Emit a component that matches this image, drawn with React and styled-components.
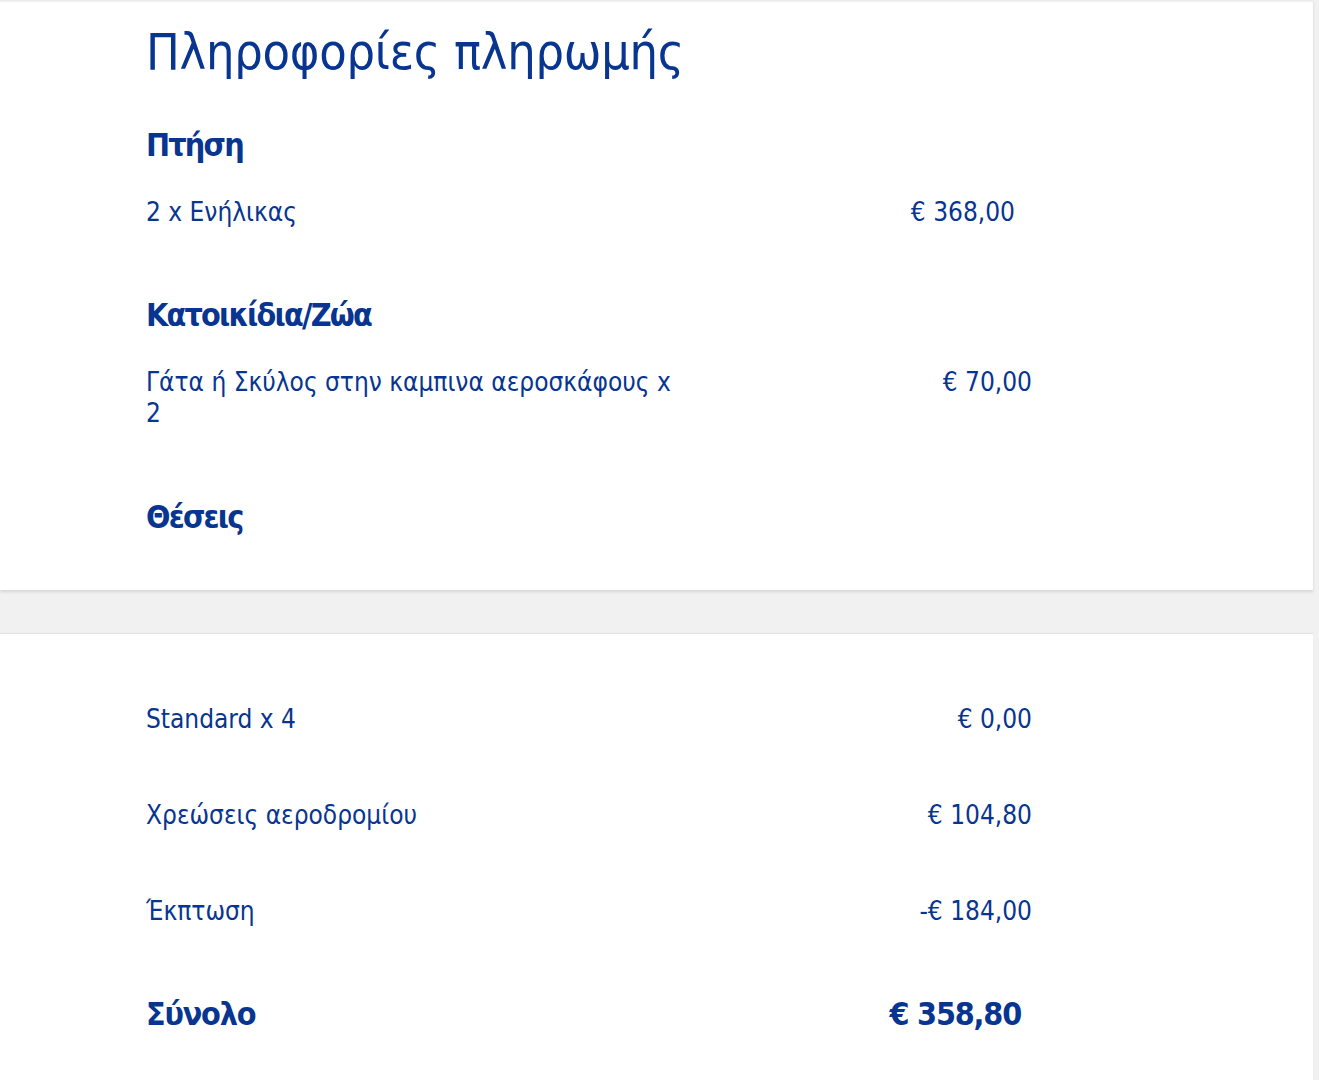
import React from 'react';
import styled, { createGlobalStyle } from 'styled-components';

const GlobalStyle = createGlobalStyle`
	html, body {
		margin: 0;
		padding: 0;
		background: #f1f1f1;
	}
	body {
		font-family: "DejaVu Sans Condensed", "DejaVu Sans", sans-serif;
		color: #073590;
	}
`;

const Page = styled.div`
	width: 1313px;
	min-height: 1080px;
	display: flex;
	flex-direction: column;
	gap: 44px;
`;

const Card = styled.section`
	background: #ffffff;
	padding: ${(props) => props.$padding};
	box-shadow: ${(props) => props.$shadow};
	flex: ${(props) => (props.$fill ? 1 : 'none')};
`;

const Title = styled.h1`
	margin: 0 0 43px 0;
	font-size: 50px;
	line-height: 60px;
	font-weight: 400;
	letter-spacing: -0.25px;
`;

const SectionTitle = styled.h3`
	margin: 0 0 ${(props) => props.$after || '32px'} 0;
	font-size: 32px;
	line-height: 40px;
	font-weight: 700;
	letter-spacing: -1.8px;
`;

const Row = styled.div`
	width: 886px;
	display: flex;
	justify-content: space-between;
	align-items: flex-start;
	margin-bottom: ${(props) => props.$after || '0'};
	padding-right: ${(props) => props.$inset || '0'};
	box-sizing: border-box;
	font-size: ${(props) => (props.$total ? '32px' : '26px')};
	font-weight: ${(props) => (props.$total ? 700 : 400)};
	line-height: ${(props) => (props.$total ? '40px' : '31px')};
	letter-spacing: ${(props) => (props.$total ? '-1.2px' : '0')};
`;

const Label = styled.span`
	width: 545px;
`;

const Price = styled.span`
	white-space: nowrap;
	text-align: right;
`;

const App = () => {
	return (
		<>
			<GlobalStyle />
			<Page>
				<Card
					$padding="22px 0 53px 146px"
					$shadow="inset 0 3px 3px -2px rgba(0,0,0,0.12), 0 2px 3px rgba(0,0,0,0.12)"
				>
					<Title>Πληροφορίες πληρωμής</Title>
					<SectionTitle>Πτήση</SectionTitle>
					<Row $after="67px" $inset="17px">
						<Label>2 x Ενήλικας</Label>
						<Price>€ 368,00</Price>
					</Row>
					<SectionTitle>Κατοικίδια/Ζώα</SectionTitle>
					<Row $after="68px">
						<Label>Γάτα ή Σκύλος στην καμπινα αεροσκάφους x 2</Label>
						<Price>€ 70,00</Price>
					</Row>
					<SectionTitle $after="0">Θέσεις</SectionTitle>
				</Card>
				<Card $fill $padding="70px 0 40px 146px" $shadow="0 -1px 1px rgba(0,0,0,0.06)">
					<Row $after="65px">
						<Label>Standard x 4</Label>
						<Price>€ 0,00</Price>
					</Row>
					<Row $after="65px">
						<Label>Χρεώσεις αεροδρομίου</Label>
						<Price>€ 104,80</Price>
					</Row>
					<Row $after="67px">
						<Label>Έκπτωση</Label>
						<Price>-€ 184,00</Price>
					</Row>
					<Row $total $inset="11px">
						<Label>Σύνολο</Label>
						<Price>€ 358,80</Price>
					</Row>
				</Card>
			</Page>
		</>
	);
};

export default App;
